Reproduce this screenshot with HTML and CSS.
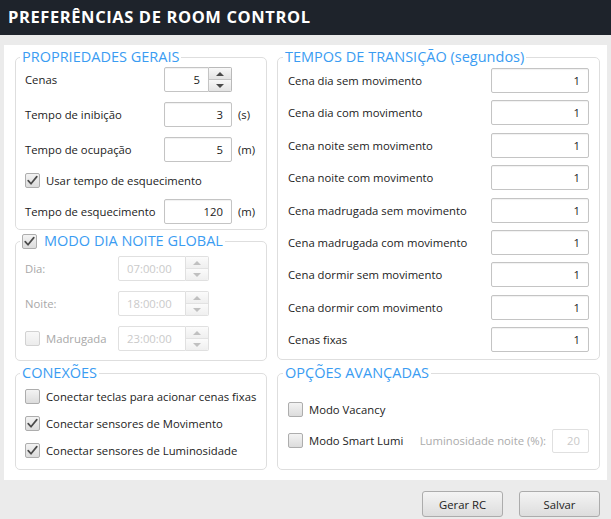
FILE: index.html
```html
<!DOCTYPE html>
<html lang="pt">
<head>
<meta charset="utf-8">
<title>Preferências de Room Control</title>
<link rel="stylesheet" href="styles.css">
</head>
<body>
<div class="titlebar">PREFERÊNCIAS DE ROOM CONTROL</div>
<div class="panel">
  <div class="col">
    <fieldset class="grp g1">
      <legend>PROPRIEDADES GERAIS</legend>
      <div class="row">
        <span class="lbl">Cenas</span>
        <div class="spin">
          <input class="field" type="text" value="5" readonly>
          <div class="btns"><span class="up"></span><span class="dn"></span></div>
        </div>
      </div>
      <div class="row">
        <span class="lbl">Tempo de inibição</span>
        <input class="field" type="text" value="3" readonly>
        <span class="unit">(s)</span>
      </div>
      <div class="row">
        <span class="lbl">Tempo de ocupação</span>
        <input class="field" type="text" value="5" readonly>
        <span class="unit">(m)</span>
      </div>
      <div class="row crow">
        <span class="cb on"><svg viewBox="0 0 15 15"><path d="M3.2 7.6 L6 10.8 L11.8 3.6"/></svg></span>
        <span class="ctext">Usar tempo de esquecimento</span>
      </div>
      <div class="row">
        <span class="lbl">Tempo de esquecimento</span>
        <input class="field" type="text" value="120" readonly>
        <span class="unit">(m)</span>
      </div>
    </fieldset>

    <fieldset class="grp g2">
      <legend><span class="cb on"><svg viewBox="0 0 15 15"><path d="M3.2 7.6 L6 10.8 L11.8 3.6"/></svg></span><span class="lgtext">MODO DIA NOITE GLOBAL</span></legend>
      <div class="row2">
        <span class="lbl dis">Dia:</span>
        <div class="spin wide dis">
          <input class="field" type="text" value="07:00:00" readonly>
          <div class="btns"><span class="up"></span><span class="dn"></span></div>
        </div>
      </div>
      <div class="row2">
        <span class="lbl dis">Noite:</span>
        <div class="spin wide dis">
          <input class="field" type="text" value="18:00:00" readonly>
          <div class="btns"><span class="up"></span><span class="dn"></span></div>
        </div>
      </div>
      <div class="row2">
        <span class="lbl dis withcb"><span class="cb disbox"></span><span class="ctext">Madrugada</span></span>
        <div class="spin wide dis">
          <input class="field" type="text" value="23:00:00" readonly>
          <div class="btns"><span class="up"></span><span class="dn"></span></div>
        </div>
      </div>
    </fieldset>

    <fieldset class="grp g3">
      <legend>CONEXÕES</legend>
      <div class="crow">
        <span class="cb"></span>
        <span class="ctext">Conectar teclas para acionar cenas fixas</span>
      </div>
      <div class="crow">
        <span class="cb on"><svg viewBox="0 0 15 15"><path d="M3.2 7.6 L6 10.8 L11.8 3.6"/></svg></span>
        <span class="ctext">Conectar sensores de Movimento</span>
      </div>
      <div class="crow">
        <span class="cb on"><svg viewBox="0 0 15 15"><path d="M3.2 7.6 L6 10.8 L11.8 3.6"/></svg></span>
        <span class="ctext">Conectar sensores de Luminosidade</span>
      </div>
    </fieldset>
  </div>

  <div class="col">
    <fieldset class="grp g4">
      <legend>TEMPOS DE TRANSIÇÃO (segundos)</legend>
      <div class="trow"><span class="lbl">Cena dia sem movimento</span><input class="field" type="text" value="1" readonly></div>
      <div class="trow"><span class="lbl">Cena dia com movimento</span><input class="field" type="text" value="1" readonly></div>
      <div class="trow"><span class="lbl">Cena noite sem movimento</span><input class="field" type="text" value="1" readonly></div>
      <div class="trow"><span class="lbl">Cena noite com movimento</span><input class="field" type="text" value="1" readonly></div>
      <div class="trow"><span class="lbl">Cena madrugada sem movimento</span><input class="field" type="text" value="1" readonly></div>
      <div class="trow"><span class="lbl">Cena madrugada com movimento</span><input class="field" type="text" value="1" readonly></div>
      <div class="trow"><span class="lbl">Cena dormir sem movimento</span><input class="field" type="text" value="1" readonly></div>
      <div class="trow"><span class="lbl">Cena dormir com movimento</span><input class="field" type="text" value="1" readonly></div>
      <div class="trow"><span class="lbl">Cenas fixas</span><input class="field" type="text" value="1" readonly></div>
    </fieldset>

    <fieldset class="grp g5">
      <legend>OPÇÕES AVANÇADAS</legend>
      <div class="arow">
        <span class="cb"></span>
        <span class="ctext">Modo Vacancy</span>
      </div>
      <div class="arow">
        <span class="cb"></span>
        <span class="ctext">Modo Smart Lumi</span>
        <span class="lumi">Luminosidade noite (%):</span>
        <input class="field small dis" type="text" value="20" readonly>
      </div>
    </fieldset>
  </div>
</div>
<div class="footer">
  <button class="btn" type="button">Gerar RC</button>
  <button class="btn" type="button">Salvar</button>
</div>
</body>
</html>
```

FILE: styles.css
```css
* { box-sizing: border-box; }

html, body {
  margin: 0;
  padding: 0;
}

body {
  background: #ebebeb;
  font-family: "Open Sans", "Noto Sans", "DejaVu Sans", sans-serif;
  font-size: 11.3px;
  color: #222222;
  width: 611px;
  height: 519px;
  overflow: hidden;
}

.titlebar {
  height: 35px;
  background: #1e232b;
  color: #ffffff;
  font-weight: 700;
  font-size: 16.5px;
  line-height: 34px;
  padding-left: 8px;
  letter-spacing: 0.6px;
}

.panel {
  margin: 10px 4px 0 4px;
  width: 603px;
  background: #ffffff;
  padding: 4px 7px 10px 11px;
  display: flex;
  gap: 10px;
  align-items: flex-start;
}

.col {
  display: flex;
  flex-direction: column;
}

.col:first-child { width: 252px; }
.col:last-child { width: 323px; }

.grp {
  margin: 0;
  border: 1px solid #dedede;
  border-radius: 5px;
  min-width: 0;
}

.grp legend {
  font-size: 14.5px;
  line-height: 16px;
  height: 16px;
  color: #3a9cf2;
  padding: 0 2px;
  margin: 0;
  display: flex;
  align-items: center;
}

.g1 { padding: 2px 9px 5px 4px; }
.g2 { padding: 7px 9px 9px 4px; margin-top: 3px; }
.g3 { padding: 8px 9px 11px 4px; margin-top: 4px; }
.g4 { padding: 3px 10px 7px 5px; }
.g5 { padding: 16px 10px 16px 5px; margin-top: 5px; }

.g1 { display: grid; row-gap: 10px; }
.g2 { display: grid; row-gap: 10px; }
.g3 { display: grid; row-gap: 12px; }
.g4 { display: grid; row-gap: 7.4px; }
.g5 { display: grid; row-gap: 6px; }

.row {
  display: grid;
  grid-template-columns: 139px 68px auto;
  align-items: center;
  height: 25px;
  padding-left: 5px;
}

.row.crow {
  display: flex;
  height: 17px;
}

.row2 {
  display: grid;
  grid-template-columns: 93px 91px;
  align-items: center;
  height: 25px;
  padding-left: 5px;
}

.crow {
  display: flex;
  align-items: center;
  height: 15px;
  padding-left: 5px;
}

.trow {
  display: grid;
  grid-template-columns: 1fr 98px;
  align-items: center;
  height: 25px;
  padding-left: 5px;
}

.arow {
  display: flex;
  align-items: center;
  height: 25px;
  padding-left: 5px;
}

.lbl { white-space: nowrap; }
.lbl.dis { color: #a8a8a8; }
.withcb { display: flex; align-items: center; }

.unit { margin-left: 6px; }

.ctext { margin-left: 6px; white-space: nowrap; }
.lgtext { margin-left: 7px; }

.field {
  height: 25px;
  width: 100%;
  border: 1px solid #c4c4c4;
  border-radius: 2px;
  background: #ffffff;
  box-shadow: inset 0 1px 1px rgba(0,0,0,0.06);
  font-family: inherit;
  font-size: 11.3px;
  color: #222222;
  text-align: right;
  padding: 0 8px 0 4px;
  margin: 0;
  outline: none;
}

.field.small {
  width: 37px;
  height: 24px;
  margin-left: 6px;
}

.field.dis,
.spin.dis .field {
  color: #cacaca;
  border-color: #e0e0e0;
  box-shadow: none;
}

.spin.dis .field { text-align: left; padding-left: 8px; }

.spin {
  display: flex;
  height: 25px;
}

.spin .field {
  width: 45px;
  border-radius: 2px 0 0 2px;
  padding-right: 8px;
}

.spin.wide .field { width: 68px; }

.btns {
  width: 23px;
  display: flex;
  flex-direction: column;
  border: 1px solid #b9b9b9;
  border-left: none;
  border-radius: 0 2px 2px 0;
  overflow: hidden;
}

.btns span {
  flex: 1;
  display: flex;
  align-items: center;
  justify-content: center;
  background: linear-gradient(#f8f8f8, #e3e3e3);
}

.btns .up { border-bottom: 1px solid #c4c4c4; }

.btns .up::after,
.btns .dn::after {
  content: "";
  width: 0;
  height: 0;
  border-left: 4px solid transparent;
  border-right: 4px solid transparent;
}

.btns .up::after { border-bottom: 4px solid #4a4a4a; }
.btns .dn::after { border-top: 4px solid #4a4a4a; }

.spin.dis .btns { border-color: #e0e0e0; }
.spin.dis .btns span { background: linear-gradient(#fbfbfb, #efefef); }
.spin.dis .btns .up { border-bottom-color: #e2e2e2; }
.spin.dis .btns .up::after { border-bottom-color: #c0c0c0; }
.spin.dis .btns .dn::after { border-top-color: #c0c0c0; }

.cb {
  flex: none;
  width: 15px;
  height: 15px;
  border: 1px solid #adadad;
  border-radius: 2px;
  background: linear-gradient(#f3f3f3, #dcdcdc);
  display: inline-flex;
  align-items: center;
  justify-content: center;
}

.cb svg {
  width: 15px;
  height: 15px;
  margin: -1px;
}

.cb svg path {
  fill: none;
  stroke: #4a4a4a;
  stroke-width: 1.7;
  stroke-linecap: round;
  stroke-linejoin: round;
}

.cb.disbox {
  border-color: #d2d2d2;
  background: linear-gradient(#f8f8f8, #ececec);
}

.lumi {
  margin-left: auto;
  color: #ababab;
  white-space: nowrap;
}

.footer {
  display: flex;
  justify-content: flex-end;
  gap: 16px;
  padding: 11px 11px 0 0;
}

.btn {
  width: 81px;
  height: 26px;
  border: 1px solid #acacac;
  border-radius: 3px;
  background: linear-gradient(#f4f4f4, #dddddd);
  font-family: inherit;
  font-size: 11.3px;
  color: #222222;
  padding: 0;
  margin: 0;
}
```
